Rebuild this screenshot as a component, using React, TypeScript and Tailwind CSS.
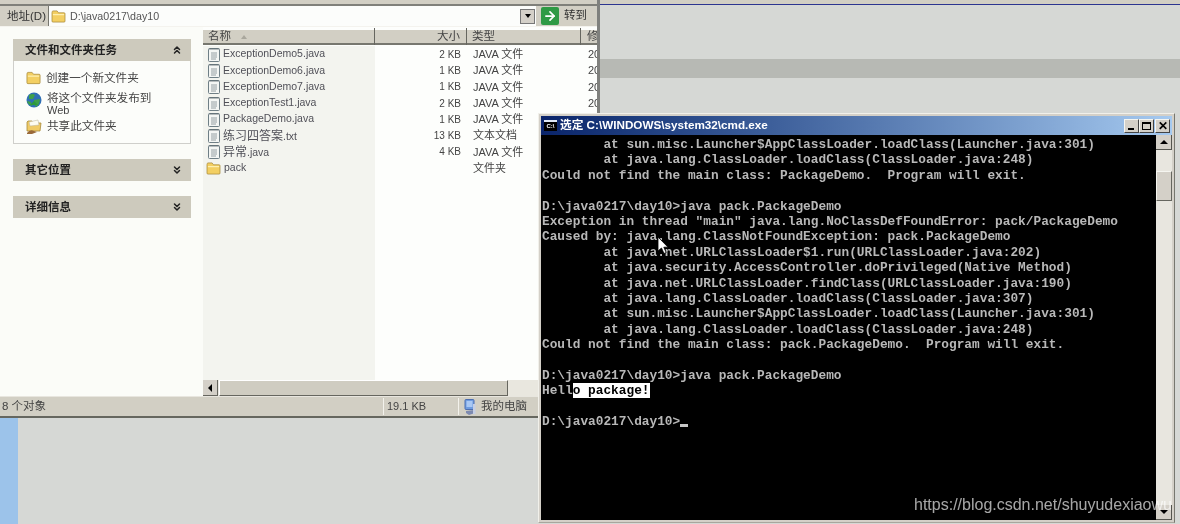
import { ArrowRight, ChevronsDown, ChevronsUp } from 'lucide-react';

const uiFont = { fontFamily: '"Liberation Sans", "Noto Sans CJK SC", sans-serif' };

const files = [
  { name: 'ExceptionDemo5.java', size: '2 KB', type: 'JAVA 文件', date: true },
  { name: 'ExceptionDemo6.java', size: '1 KB', type: 'JAVA 文件', date: true },
  { name: 'ExceptionDemo7.java', size: '1 KB', type: 'JAVA 文件', date: true },
  { name: 'ExceptionTest1.java', size: '2 KB', type: 'JAVA 文件', date: true },
  { name: 'PackageDemo.java', size: '1 KB', type: 'JAVA 文件' },
  { name: '.txt', cjk: '练习四答案', size: '13 KB', type: '文本文档' },
  { name: '.java', cjk: '异常', size: '4 KB', type: 'JAVA 文件' },
  { name: 'pack', size: '', type: '文件夹', folder: true },
];

const consoleLines = [
  '        at sun.misc.Launcher$AppClassLoader.loadClass(Launcher.java:301)',
  '        at java.lang.ClassLoader.loadClass(ClassLoader.java:248)',
  'Could not find the main class: PackageDemo.  Program will exit.',
  '',
  'D:\\java0217\\day10>java pack.PackageDemo',
  'Exception in thread "main" java.lang.NoClassDefFoundError: pack/PackageDemo',
  'Caused by: java.lang.ClassNotFoundException: pack.PackageDemo',
  '        at java.net.URLClassLoader$1.run(URLClassLoader.java:202)',
  '        at java.security.AccessController.doPrivileged(Native Method)',
  '        at java.net.URLClassLoader.findClass(URLClassLoader.java:190)',
  '        at java.lang.ClassLoader.loadClass(ClassLoader.java:307)',
  '        at sun.misc.Launcher$AppClassLoader.loadClass(Launcher.java:301)',
  '        at java.lang.ClassLoader.loadClass(ClassLoader.java:248)',
  'Could not find the main class: pack.PackageDemo.  Program will exit.',
  '',
  'D:\\java0217\\day10>java pack.PackageDemo',
];

function FolderIcon({ className = '' }: { className?: string }) {
  return (
    <svg viewBox="0 0 16 14" className={className}>
      <path d="M1 3 L1 12 Q1 13 2 13 L14 13 Q15 13 15 12 L15 4 Q15 3 14 3 L8 3 L6.5 1 L2 1 Q1 1 1 3 Z" fill="#f3cf62" stroke="#a88a3a" strokeWidth="0.8" />
      <path d="M2 5 L14 5" stroke="#fff2b8" strokeWidth="1.2" />
    </svg>
  );
}

function NoteIcon() {
  return (
    <svg viewBox="0 0 12 15" className="w-[12px] h-[15px] shrink-0">
      <rect x="0.5" y="1.5" width="11" height="13" rx="1" fill="#f4f6f4" stroke="#6f7f86" />
      <path d="M2 1 V3 M4 1 V3 M6 1 V3 M8 1 V3 M10 1 V3" stroke="#59656b" strokeWidth="0.8" />
      <path d="M3 6 H9 M3 8 H9 M3 10 H9 M3 12 H8" stroke="#7f8a90" strokeWidth="0.8" />
    </svg>
  );
}

function GlobeIcon() {
  return (
    <svg viewBox="0 0 16 16" className="w-[16px] h-[16px] shrink-0">
      <circle cx="8" cy="8" r="7.5" fill="#2f6fb5" />
      <path d="M3 3 Q7 1 9 3 L7 7 L3 7 Z M8 8 L14 7 Q14 12 10 15 L8 12 Z M1 9 L5 10 L6 14 Q2 13 1 9 Z" fill="#3fa04a" />
      <path d="M8 9 L4 13 H12 Z" fill="#2d9a3c" />
    </svg>
  );
}

function ShareFolderIcon() {
  return (
    <svg viewBox="0 0 16 15" className="w-[16px] h-[15px] shrink-0">
      <path d="M1 3 L1 12 L14 12 L15 4 L8 4 L6 2 L2 2 Z" fill="#f0cb66" stroke="#a88a3a" strokeWidth="0.8" />
      <path d="M3 3 L12 1 L13 6 L4 7 Z" fill="#fdfcf2" stroke="#b8b39a" strokeWidth="0.5" />
      <path d="M1 14 Q4 10 8 12 L11 13 L6 15 L1 15 Z" fill="#9a6a3a" />
    </svg>
  );
}

function ComputerIcon() {
  return (
    <svg viewBox="0 0 12 16" className="w-[12px] h-[16px] shrink-0">
      <rect x="1" y="0.5" width="9" height="10" rx="1" fill="#6f9ce0" stroke="#4c6eb0" />
      <rect x="2.5" y="2" width="6" height="6" fill="#a9c8f4" />
      <path d="M2 12 L10 11 L11 14 L5 16 L2 14 Z" fill="#7d8ab0" />
      <path d="M9 5 L11.5 5 L11.5 15 L9 15 Z" fill="#c6cfe4" />
    </svg>
  );
}

function Panel({ title, open, children }: { title: string; open?: boolean; children?: React.ReactNode }) {
  return (
    <div className="text-[#333]">
      <div className="h-[22px] bg-[#cdcabd] flex items-center justify-between pl-[12px] pr-[8px]">
        <span className="text-[11.5px] font-bold text-[#222] pt-[2px]">{title}</span>
        {open ? <ChevronsUp className="w-[12px] h-[12px] text-[#222]" strokeWidth={3} /> : <ChevronsDown className="w-[12px] h-[12px] text-[#222]" strokeWidth={3} />}
      </div>
      {children}
    </div>
  );
}

function Explorer() {
  return (
    <div style={uiFont} className="absolute left-0 top-0 w-[600px] h-[418px] flex flex-col bg-[#d2cfc4] border-r-[3px] border-b-2 border-r-[#7f807d] border-b-[#66675f] text-[#444] text-[11px]">
      <div className="h-[4px] shrink-0 bg-[#d2cfc4]" />
      <div className="h-[2px] shrink-0 bg-[#80807a]" />

      {/* address bar */}
      <div className="h-[21px] shrink-0 flex items-center border-b border-[#f4f3ee]">
        <span className="pl-[7px] w-[48px] text-[11.5px] text-[#333] shrink-0 pt-px">地址(D)</span>
        <div className="w-[488px] h-[20px] bg-[#fcfdfb] border-l border-[#77776f] flex items-center pl-[2px] gap-[4px]">
          <FolderIcon className="w-[15px] h-[13px]" />
          <span className="text-[10.7px] text-[#555]">D:\java0217\day10</span>
          <div className="ml-auto mr-[1px] w-[15px] h-[15px] bg-[#d4d0c8] border border-[#777] flex items-center justify-center">
            <div className="w-0 h-0 border-x-[3px] border-x-transparent border-t-[4px] border-t-black" />
          </div>
        </div>
        <div className="ml-[5px] w-[18px] h-[18px] bg-[#2f9a45] rounded-[2px] flex items-center justify-center">
          <ArrowRight className="w-[14px] h-[14px] text-white" strokeWidth={3} />
        </div>
        <span className="ml-[5px] text-[11.5px] text-[#333]">转到</span>
      </div>

      <div className="flex flex-1 min-h-0">
        {/* task sidebar */}
        <div className="w-[203px] shrink-0 bg-[#fbfcf8] pt-[12px] pl-[13px] pr-[12px] flex flex-col gap-[15px]">
          <Panel title="文件和文件夹任务" open>
            <div className="h-[83px] bg-[#fcfdfa] border-x border-b border-[#cfcfcb] pt-[9px] pl-[12px] text-[11.6px] text-[#444]">
              <div className="flex items-center gap-[5px] h-[16px]"><FolderIcon className="w-[15px] h-[14px] shrink-0" />创建一个新文件夹</div>
              <div className="flex gap-[5px] mt-[6px] items-start">
                <GlobeIcon />
                <div className="leading-[12px]">将这个文件夹发布到<br /><span className="text-[11px]">Web</span></div>
              </div>
              <div className="flex items-center gap-[5px] h-[16px] mt-[2px]"><ShareFolderIcon />共享此文件夹</div>
            </div>
          </Panel>
          <Panel title="其它位置" />
          <Panel title="详细信息" />
        </div>

        {/* file list */}
        <div className="flex-1 min-w-0 flex flex-col bg-[#fdfefc] overflow-hidden pt-[3px]">
          <div className="h-[15px] shrink-0 bg-[#d2cfc4] border-b-2 border-[#77776f] flex items-center text-[11.5px] text-[#444]">
            <div className="w-[172px] shrink-0 pl-[5px] border-r border-[#66665f] flex items-center gap-[10px]">
              名称
              <div className="w-0 h-0 border-x-[3px] border-x-transparent border-b-[4px] border-b-[#a9a79d]" />
            </div>
            <div className="w-[92px] shrink-0 pr-[6px] text-right border-r border-[#66665f]">大小</div>
            <div className="w-[114px] shrink-0 pl-[5px] border-r border-[#66665f]">类型</div>
            <div className="pl-[6px] whitespace-nowrap">修</div>
          </div>
          <div className="flex-1 flex flex-col min-h-0 pt-px">
            {files.map((f) => (
              <div key={f.name} className="h-[16.3px] flex items-center shrink-0">
                <div className="w-[172px] h-full shrink-0 bg-[#f3f4ef] pl-[5px] flex items-center gap-[3px]">
                  {f.folder ? <FolderIcon className="w-[15px] h-[13px] -ml-[2px]" /> : <NoteIcon />}
                  <span className="text-[#505058] text-[10.5px]">
                    {f.cjk && <span className="text-[12px]">{f.cjk}</span>}
                    {f.name}
                  </span>
                </div>
                <div className="w-[92px] shrink-0 pr-[6px] text-right text-[10px]">{f.size}</div>
                <div className="w-[114px] shrink-0 pl-[6px] whitespace-nowrap">{f.type}</div>
                {f.date && <div className="pl-[7px]">20</div>}
              </div>
            ))}
            <div className="w-[172px] flex-1 bg-[#f3f4ef]" />
          </div>
          {/* horizontal scrollbar */}
          <div className="h-[16px] shrink-0 flex bg-[#e9e7df]">
            <div className="w-[15px] bg-[#d4d0c8] border-r border-b border-[#66665f] flex items-center justify-center">
              <div className="w-0 h-0 border-y-[4px] border-y-transparent border-r-[4px] border-r-black" />
            </div>
            <div className="w-[289px] ml-px bg-[#cfccc1] border-t border-l border-white border-r border-b border-r-[#66665f] border-b-[#66665f]" />
          </div>
        </div>
      </div>

      {/* status bar */}
      <div className="h-[20px] shrink-0 flex items-center text-[11.5px] text-[#444] border-t border-[#e8e6df]">
        <div className="w-[384px] pl-[2px] border-r border-[#f3f2ec]">8 个对象</div>
        <div className="w-[75px] pl-[3px] border-r border-[#f3f2ec] text-[11px]">19.1 KB</div>
        <div className="pl-[5px] flex items-center gap-[5px]"><ComputerIcon />我的电脑</div>
      </div>
    </div>
  );
}

function TitleButton({ children }: { children: React.ReactNode }) {
  return (
    <div className="w-[15px] h-[14px] bg-[#d4d0c8] border border-[#f5f5f0] border-r-[#444] border-b-[#444] flex items-center justify-center relative">
      {children}
    </div>
  );
}

function CmdWindow() {
  return (
    <div className="absolute left-[538px] top-[113px] w-[637px] h-[410px] bg-[#d4d0c8] border border-[#f1f0ea] border-r-[#77776f] border-b-[#a8a69d] p-[2px] flex flex-col">
      <div style={uiFont} className="h-[19px] shrink-0 bg-gradient-to-r from-[#0a246a] to-[#a6caf0] flex items-center pl-[3px] pr-[2px] text-white text-[11.7px] font-bold">
        <div className="w-[13px] h-[11px] bg-black border-t-2 border-[#dfe8f6] text-[6px] leading-[8px] font-bold text-white text-center shrink-0 overflow-hidden">C:\</div>
        <span className="ml-[3px] whitespace-pre pb-[2px]">选定 C:\WINDOWS\system32\cmd.exe</span>
        <div className="ml-auto flex">
          <TitleButton><div className="absolute left-[3px] bottom-[2px] w-[6px] h-[2px] bg-black" /></TitleButton>
          <TitleButton><div className="w-[9px] h-[8px] border border-black border-t-2" /></TitleButton>
          <div className="w-px" />
          <TitleButton><span className="text-[12px] leading-none font-bold text-black">✕</span></TitleButton>
        </div>
      </div>
      <div className="flex flex-1 min-h-0">
        <pre style={{ fontFamily: '"Liberation Mono", "DejaVu Sans Mono", monospace' }} className="flex-1 bg-black text-[#b8b8b8] text-[12.8px] leading-[15.4px] font-bold pt-[2px] pl-px overflow-hidden">
          {consoleLines.map((line, i) => (
            <div key={i} className="h-[15.4px]">{line}</div>
          ))}
          <div className="h-[15.4px]">Hell<span className="bg-white text-black inline-block h-[15px]">o package!</span></div>
          <div className="h-[15.4px]" />
          <div className="h-[15.4px] flex items-end">D:\java0217\day10&gt;<span className="w-[8px] h-[3px] bg-[#c6c6c6] mb-[2px]" /></div>
        </pre>
        {/* vertical scrollbar */}
        <div className="w-[16px] shrink-0 bg-[#e8e6df] flex flex-col">
          <div className="h-[15px] bg-[#d4d0c8] border-r border-b border-[#55554f] flex items-center justify-center">
            <div className="w-0 h-0 border-x-[4px] border-x-transparent border-b-[4px] border-b-black" />
          </div>
          <div className="h-[21px]" />
          <div className="h-[30px] bg-[#d4d0c8] border border-[#f5f5f0] border-r-[#66665f] border-b-[#66665f]" />
          <div className="flex-1" />
          <div className="h-[15px] bg-[#d4d0c8] border-r border-b border-[#55554f] flex items-center justify-center">
            <div className="w-0 h-0 border-x-[4px] border-x-transparent border-t-[4px] border-t-black" />
          </div>
        </div>
      </div>
    </div>
  );
}

export default function App() {
  return (
    <div className="relative w-[1180px] h-[524px] overflow-hidden flex bg-[#d6d8d5] blur-[0.4px]">
      {/* window behind */}
      <div className="w-[18px] shrink-0 bg-[#9cc3ea]" />
      <div className="flex-1 flex flex-col">
        <div className="h-[4px] bg-[#d2cfc4]" />
        <div className="h-px bg-[#2c3590]" />
        <div className="h-[54px]" />
        <div className="h-[19px] bg-[#b7b9b4]" />
      </div>

      <Explorer />
      <CmdWindow />

      {/* mouse pointer */}
      <svg viewBox="0 0 12 19" className="absolute left-[657px] top-[236px] w-[12px] h-[19px]">
        <path d="M1 1 V15 L4.5 12 L7 17.5 L9.2 16.5 L6.8 11.2 H11 Z" fill="#fff" stroke="#000" strokeWidth="0.8" />
      </svg>

      {/* watermark */}
      <span style={{ fontFamily: '"Liberation Sans", sans-serif' }} className="absolute left-[914px] top-[496px] text-[16px] leading-[18px] text-white/65 whitespace-nowrap">
        https://blog.csdn.net/shuyudexiaowu
      </span>
    </div>
  );
}
